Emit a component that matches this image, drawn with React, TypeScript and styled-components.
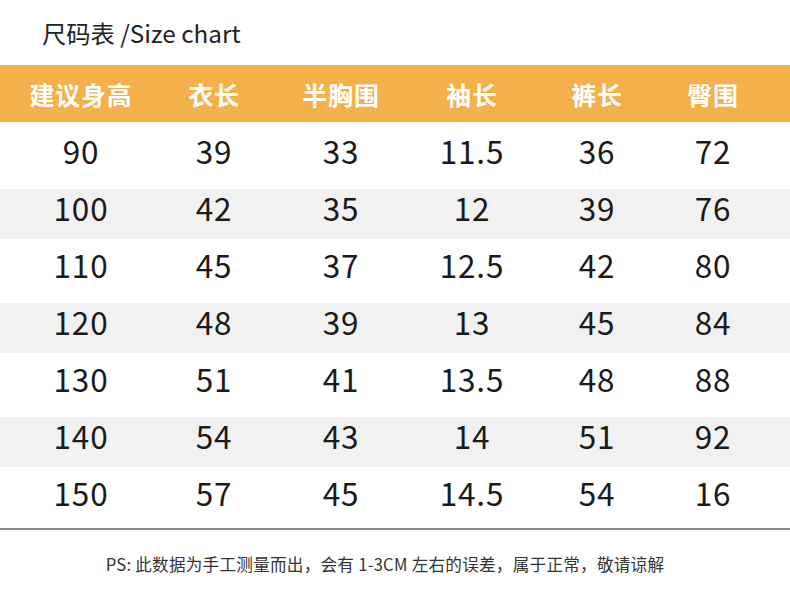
import React from "react";
import styled, { createGlobalStyle } from "styled-components";

const GlobalStyle = createGlobalStyle`
  html, body {
    margin: 0;
    padding: 0;
    background: #ffffff;
  }
  body {
    font-family: "Noto Sans CJK SC", "Noto Sans", sans-serif;
    color: #222222;
  }
`;

const Page = styled.div`
  width: 790px;
  height: 611px;
  overflow: hidden;
  background: #ffffff;
`;

const Title = styled.div`
  height: 65px;
  display: flex;
  align-items: center;
  padding-left: 42px;
  font-size: 24.3px;
  color: #222222;
  font-family: "Noto Sans CJK SC", sans-serif;
`;

const COLS = "162px 104px 150px 112px 138px 94px";

const HeaderRow = styled.div`
  height: 57px;
  display: grid;
  grid-template-columns: ${COLS};
  align-items: center;
  background: #f4b04a;
`;

const HeaderCell = styled.div`
  text-align: center;
  color: #ffffff;
  font-size: 25px;
  font-weight: 700;
  letter-spacing: 0.8px;
`;

const Body = styled.div`
  display: flex;
  flex-direction: column;
  gap: 7px;
  padding-top: 10px;
  padding-bottom: 4px;
  border-bottom: 2px solid #8a8a8a;
`;

const Row = styled.div<{ $striped: boolean }>`
  height: 50px;
  display: grid;
  grid-template-columns: ${COLS};
  align-items: center;
  background: ${({ $striped }) => ($striped ? "#f1f1f1" : "#ffffff")};
`;

const Cell = styled.div`
  text-align: center;
  font-size: 31.5px;
  font-weight: 400;
  color: #1a1a1a;
  line-height: 1;
  letter-spacing: 0.8px;
  padding-bottom: 12px;
`;

const Note = styled.div`
  margin-top: 22px;
  text-align: center;
  font-size: 16.6px;
  color: #333333;
  letter-spacing: 0.25px;
  padding-right: 20px;
`;

const headers = ["建议身高", "衣长", "半胸围", "袖长", "裤长", "臀围"];

const rows: Array<Array<string>> = [
  ["90", "39", "33", "11.5", "36", "72"],
  ["100", "42", "35", "12", "39", "76"],
  ["110", "45", "37", "12.5", "42", "80"],
  ["120", "48", "39", "13", "45", "84"],
  ["130", "51", "41", "13.5", "48", "88"],
  ["140", "54", "43", "14", "51", "92"],
  ["150", "57", "45", "14.5", "54", "16"],
];

const App: React.FC = () => {
  return (
    <Page>
      <GlobalStyle />
      <Title>尺码表 /Size chart</Title>
      <HeaderRow>
        {headers.map((h) => (
          <HeaderCell key={`head-${h}`}>{h}</HeaderCell>
        ))}
      </HeaderRow>
      <Body>
        {rows.map((row, i) => (
          <Row key={`row-${row[0]}`} $striped={i % 2 === 1}>
            {row.map((value, j) => (
              <Cell key={`cell-${i}-${j}`}>{value}</Cell>
            ))}
          </Row>
        ))}
      </Body>
      <Note>PS: 此数据为手工测量而出，会有 1-3CM 左右的误差，属于正常，敬请谅解</Note>
    </Page>
  );
};

export default App;
